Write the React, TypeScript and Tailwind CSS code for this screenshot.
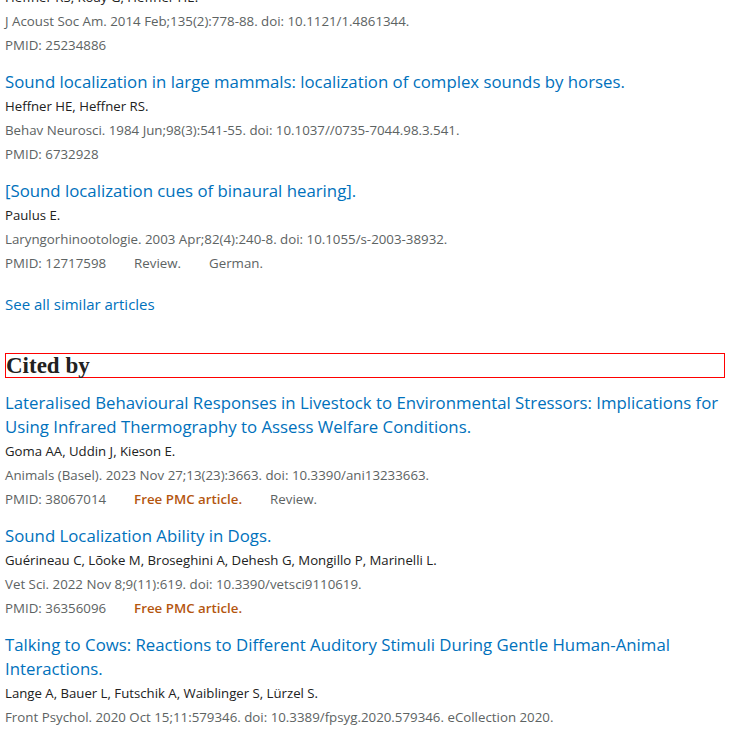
import React from 'react';

/* ── TYPES ──────────────────────────────────────────────────────────────── */

interface Article {
  title?: string;
  authors: string;
  citation: string;
  pmid: string;
  free?: boolean;
  tags?: string[];
}

/* ── DATA ───────────────────────────────────────────────────────────────── */

const SIMILAR: Article[] = [
  {
    authors: 'Heffner RS, Koay G, Heffner HE.',
    citation: 'J Acoust Soc Am. 2014 Feb;135(2):778-88. doi: 10.1121/1.4861344.',
    pmid: '25234886',
  },
  {
    title: 'Sound localization in large mammals: localization of complex sounds by horses.',
    authors: 'Heffner HE, Heffner RS.',
    citation: 'Behav Neurosci. 1984 Jun;98(3):541-55. doi: 10.1037//0735-7044.98.3.541.',
    pmid: '6732928',
  },
  {
    title: '[Sound localization cues of binaural hearing].',
    authors: 'Paulus E.',
    citation: 'Laryngorhinootologie. 2003 Apr;82(4):240-8. doi: 10.1055/s-2003-38932.',
    pmid: '12717598',
    tags: ['Review.', 'German.'],
  },
];

const CITED_BY: Article[] = [
  {
    title:
      'Lateralised Behavioural Responses in Livestock to Environmental Stressors: Implications for Using Infrared Thermography to Assess Welfare Conditions.',
    authors: 'Goma AA, Uddin J, Kieson E.',
    citation: 'Animals (Basel). 2023 Nov 27;13(23):3663. doi: 10.3390/ani13233663.',
    pmid: '38067014',
    free: true,
    tags: ['Review.'],
  },
  {
    title: 'Sound Localization Ability in Dogs.',
    authors: 'Guérineau C, Lõoke M, Broseghini A, Dehesh G, Mongillo P, Marinelli L.',
    citation: 'Vet Sci. 2022 Nov 8;9(11):619. doi: 10.3390/vetsci9110619.',
    pmid: '36356096',
    free: true,
  },
  {
    title:
      'Talking to Cows: Reactions to Different Auditory Stimuli During Gentle Human-Animal Interactions.',
    authors: 'Lange A, Bauer L, Futschik A, Waiblinger S, Lürzel S.',
    citation: 'Front Psychol. 2020 Oct 15;11:579346. doi: 10.3389/fpsyg.2020.579346. eCollection 2020.',
    pmid: '33178084',
    free: true,
  },
];

/* ── ARTICLE ────────────────────────────────────────────────────────────── */

function ArticleItem({ a }: { a: Article }) {
  return (
    <div className="mb-[13px]">
      {a.title && (
        <a href="#" className="block text-[16.8px] leading-[24px] text-[#0071bc]">
          {a.title}
        </a>
      )}
      <div className="text-[13.2px] leading-[24px] text-[#212121]">{a.authors}</div>
      <div className="text-[13.3px] leading-[24px] text-[#5d6363]">{a.citation}</div>
      <div className="flex text-[13.3px] leading-[24px] text-[#5d6363]">
        <span>PMID: {a.pmid}</span>
        {a.free && <span className="ml-[28px] font-semibold text-[#b4560f]">Free PMC article.</span>}
        {a.tags?.map((t) => (
          <span key={t} className="ml-[28px]">
            {t}
          </span>
        ))}
      </div>
    </div>
  );
}

/* ── PAGE ───────────────────────────────────────────────────────────────── */

export default function App() {
  return (
    <div className="h-[730px] overflow-hidden bg-white px-[5px] font-['Open_Sans',sans-serif]">
      <div className="-mt-[15px]">
        {SIMILAR.map((a) => (
          <ArticleItem key={a.pmid} a={a} />
        ))}
      </div>

      <a href="#" className="mt-[17px] block text-[15px] leading-[24px] text-[#0071bc]">
        See all similar articles
      </a>

      <h2 className="mt-[37px] mb-[13px] border border-[#ff0000] font-['Liberation_Serif',serif] text-[23px] font-bold leading-[23px] text-[#212121]">
        Cited by
      </h2>

      {CITED_BY.map((a) => (
        <ArticleItem key={a.pmid} a={a} />
      ))}
    </div>
  );
}
